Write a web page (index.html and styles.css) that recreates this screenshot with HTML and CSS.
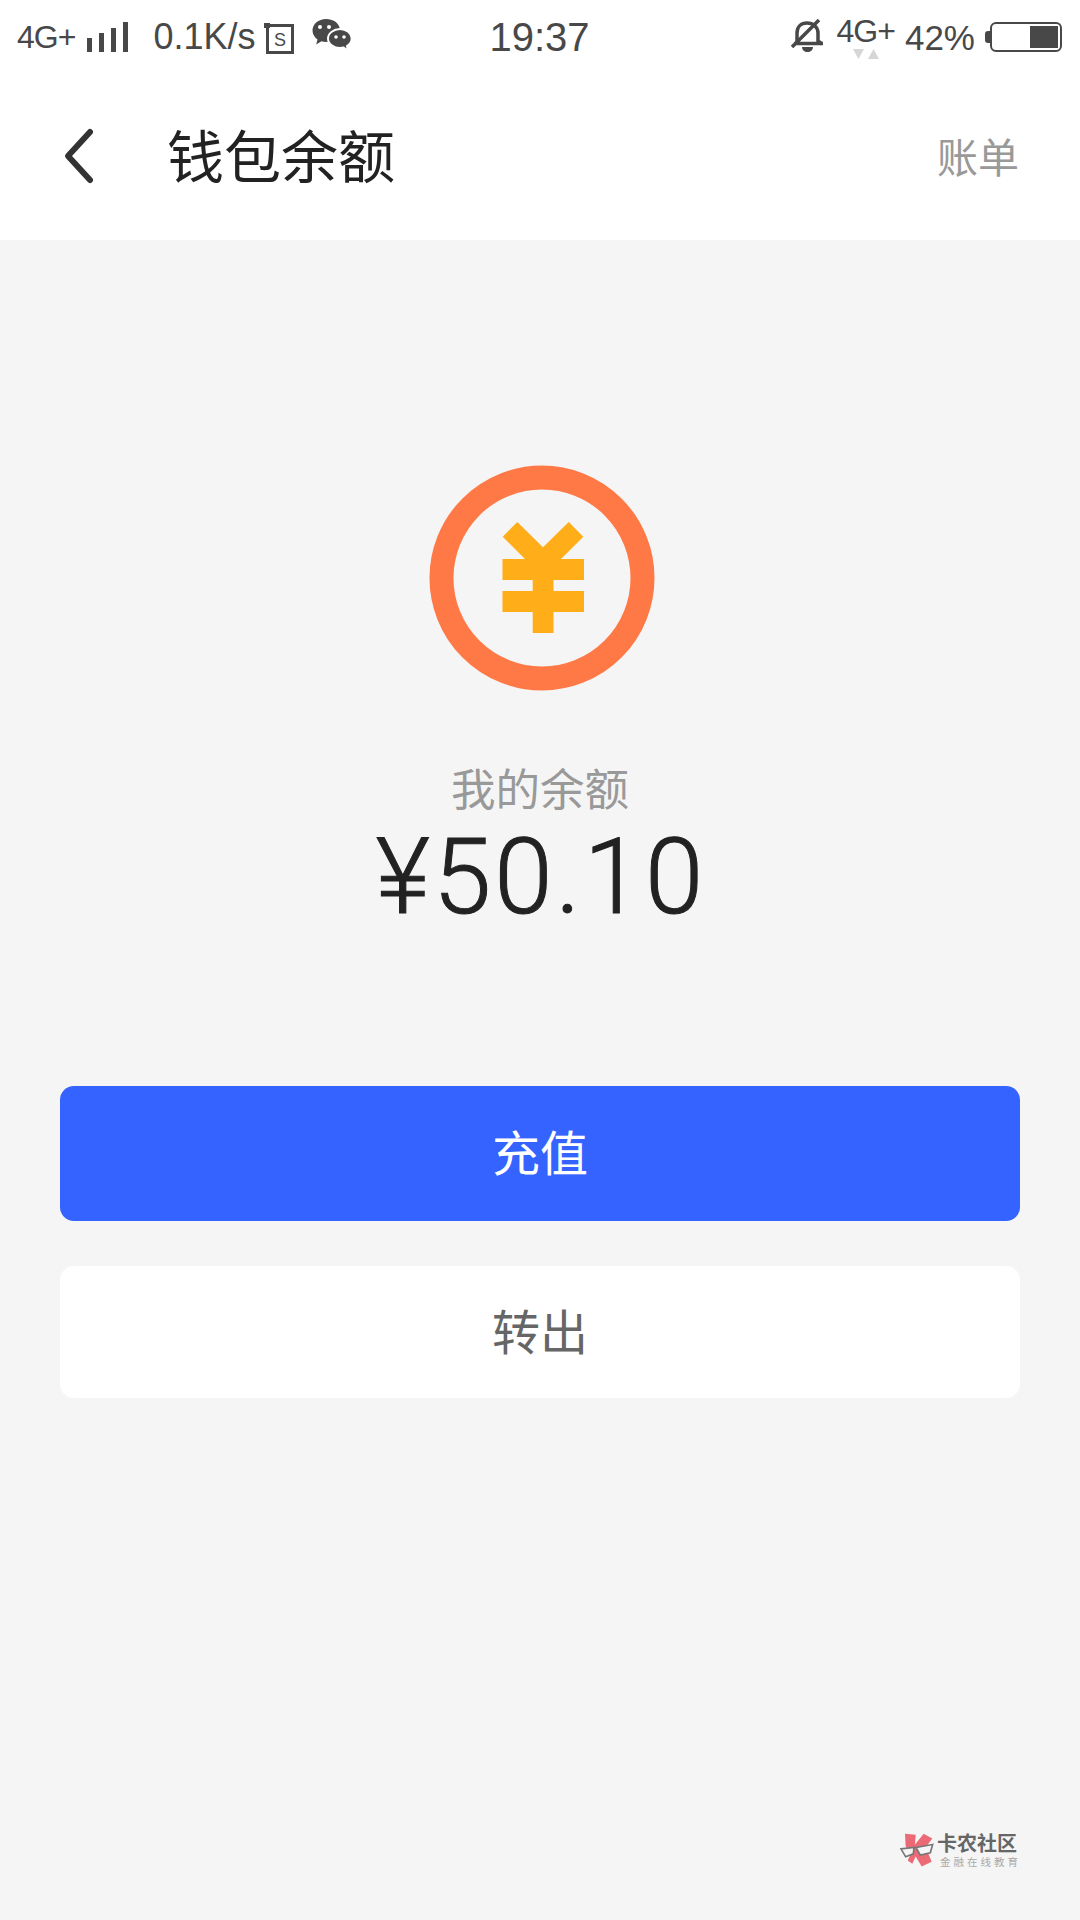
FILE: index.html
```html
<!DOCTYPE html>
<html lang="zh-CN">
<head>
<meta charset="utf-8">
<title>钱包余额</title>
<link rel="stylesheet" href="styles.css">
</head>
<body>
<div class="page">
  <header class="top">
    <div class="status">
      <div class="status-left">
        <span class="net">4G+</span>
        <svg class="signal" width="42" height="32" viewBox="0 0 42 32"><path fill="#484848" d="M0 16h5v14H0zM12 11h5v19h-5zM24 6h5v24h-5zM36 0h5v30h-5z"/></svg>
        <span class="speed">0.1K/s</span>
        <svg class="sim" width="32" height="33" viewBox="0 0 32 33"><path fill="none" stroke="#484848" stroke-width="3" d="M3.500 3.500h25v27h-25z"/><path fill="#484848" d="M0 1h6v5H0z"/><text x="16" y="23.500" text-anchor="middle" class="sim-s">S</text></svg>
        <svg class="wechat" width="40" height="36" viewBox="0 0 40 36"><path fill="#484848" d="M14 1C6.500 1 .5 6 .5 12.500c0 3.700 2 6.800 5 9l-1.300 5 5.200-3.200c1.500.4 3 .6 4.600.6 6 0 14-8 14-13C26.800 4.500 21 1 14 1z"/><path fill="#484848" stroke="#fff" stroke-width="2" d="M28 11c-6.200 0-12 4.100-12 9.500S21.800 30 28 30c1.300 0 2.500-.2 3.700-.5l4.300 3.500-1-5c2.900-1.800 4.700-4.500 4.700-7.500C39.700 15.100 34.200 11 28 11z"/><circle cx="8" cy="9" r="2" fill="#fff"/><circle cx="17" cy="9" r="2" fill="#fff"/><circle cx="24" cy="19" r="1.800" fill="#fff"/><circle cx="32" cy="19" r="1.800" fill="#fff"/></svg>
      </div>
      <div class="clock">19:37</div>
      <div class="status-right">
        <svg class="bell" width="36" height="36" viewBox="0 0 36 36"><path fill="none" stroke="#484848" stroke-width="3.500" d="M8 25V15C8 9 12 5 18 5s11 4 11 10v8l4 3"/><path fill="none" stroke="#484848" stroke-width="3.500" d="M5 25.500h29M3 29L30 2"/><path fill="#484848" d="M13 29h11c0 3-2.500 5-5.500 5s-5.500-2-5.500-5z"/></svg>
        <div class="net-stack">
          <span class="net">4G+</span>
          <svg class="arrows" width="26" height="10" viewBox="0 0 26 10"><path fill="#d6d6d6" d="M0 0h11L5.500 10zM15 10h11L20.500 0z"/></svg>
        </div>
        <span class="pct">42%</span>
        <div class="battery">
          <span class="battery-cap"></span>
          <div class="battery-body"><span class="battery-fill"></span></div>
        </div>
      </div>
    </div>
    <nav class="nav">
      <svg class="back" width="34" height="58" viewBox="0 0 34 58"><path fill="none" stroke="#333" stroke-width="6" stroke-linecap="round" stroke-linejoin="round" d="M29 5L7 29l22 24"/></svg>
      <h1 class="title">钱包余额</h1>
      <a class="bill">账单</a>
    </nav>
  </header>
  <main class="main">
    <svg class="coin" width="226" height="226" viewBox="429 465 226 226">
      <circle cx="542" cy="578" r="100.500" fill="none" stroke="#ff7946" stroke-width="24"/>
      <path fill="#ffae1a" d="M502.700 536.700L517.300 522L543 547.300L568.700 522L583.300 536.700L561 559H584V580H553.500V591H584V612H553.500V633H532.700V612H502.500V591H532.700V580H502.500V559H525z"/>
    </svg>
    <div class="label">我的余额</div>
    <div class="amount">¥50.10</div>
    <button class="btn btn-primary">充值</button>
    <button class="btn btn-plain">转出</button>
  </main>
  <div class="mark">
    <svg class="mark-logo" width="35" height="37" viewBox="15 20 105 110">
      <path fill="#ec6a75" d="M30 28L62 31L60 60L86 28L112 42L92 68L110 112L80 126L62 96L52 118L38 108L48 88L32 66z"/>
      <path fill="#f5f5f5" stroke="#777" stroke-width="5" d="M18 73L57 69L55 88L32 97zM63 69L113 60L106 85L76 92z"/>
    </svg>
    <div class="mark-text">
      <div class="mark-name">卡农社区</div>
      <div class="mark-sub">金融在线教育</div>
    </div>
  </div>
</div>
</body>
</html>
```
FILE: styles.css
```css
* { box-sizing: border-box; }
html, body { margin: 0; padding: 0; }
body {
  width: 1080px;
  height: 1920px;
  font-family: "Inter", "Noto Sans CJK SC", sans-serif;
  background: #f5f5f5;
  overflow: hidden;
}
.page { position: relative; width: 1080px; height: 1920px; display: flex; flex-direction: column; }
.top { background: #fff; height: 240px; flex: none; }

.status {
  height: 74px;
  display: grid;
  grid-template-columns: 1fr auto 1fr;
  align-items: center;
  padding: 0 18px 0 17px;
  color: #484848;
}
.status-left, .status-right { display: flex; align-items: center; }
.status-right { justify-content: flex-end; }
.net { font-size: 32px; letter-spacing: -1px; line-height: 32px; font-family: "Liberation Sans", sans-serif; }
.signal { margin-left: 12px; margin-top: 2px; }
.speed { font-size: 36px; margin-left: 24px; line-height: 40px; font-family: "Liberation Sans", sans-serif; }
.sim { margin-left: 9px; margin-top: 2px; }
.sim-s { font: 18px "Liberation Sans", sans-serif; fill: #484848; }
.wechat { margin-left: 16px; margin-top: -2px; }
.clock { font-size: 40px; line-height: 44px; font-family: "Liberation Sans", sans-serif; }
.bell { margin-top: -2px; margin-right: 1px; }
.net-stack { display: flex; flex-direction: column; align-items: center; margin-left: 11px; margin-top: 0; }
.arrows { margin-top: 2px; }
.pct { font-size: 35px; line-height: 40px; margin-left: 10px; margin-top: 2px; font-family: "Liberation Sans", sans-serif; }
.battery { display: flex; align-items: center; margin-left: 10px; }
.battery-cap { width: 5px; height: 12px; background: #484848; border-radius: 3px 0 0 3px; }
.battery-body {
  width: 72px; height: 30px;
  border: 2px solid #484848; border-radius: 6px;
  padding: 2px;
  display: flex; justify-content: flex-end;
}
.battery-fill { width: 28px; background: #484848; }

.nav { height: 166px; display: flex; align-items: center; padding: 0 61px 0 61px; }
.back { flex: none; margin-top: -3px; }
.title { margin: 2px 0 0 72px; font-size: 57px; font-weight: 400; color: #222; line-height: 70px; flex: 1; }
.bill { font-size: 41px; color: #999; line-height: 60px; margin-top: 2px; }

.main { flex: 1; display: flex; flex-direction: column; align-items: center; padding: 225px 60px 0; }
.coin { flex: none; margin-left: 3px; }
.label { font-size: 44.500px; line-height: 60px; color: #999; margin-top: 69px; }
.amount {
  font-family: "Roboto", sans-serif; font-size: 105px; line-height: 110px; color: #222; font-weight: 300;
  -webkit-text-stroke: 1px #222;
  letter-spacing: 3px; margin-top: 3px; margin-left: 2px;
}
.btn {
  width: 960px; border: 0; border-radius: 14px; font-size: 48px;
  font-family: "Noto Sans CJK SC", sans-serif; display: block;
}
.btn-primary { height: 135px; margin-top: 153px; padding-bottom: 8px; background: #3563ff; color: #fff; }
.btn-plain { height: 132px; margin-top: 45px; padding-bottom: 8px; background: #fff; color: #666; }

.mark { position: absolute; left: 900px; top: 1831px; display: flex; align-items: center; }
.mark-logo { flex: none; }
.mark-text { margin-left: 2px; margin-top: 0; display: flex; flex-direction: column; gap: 0; }
.mark-name { font-size: 20px; line-height: 24px; font-weight: 700; color: #666; font-family: "Noto Sans CJK SC", sans-serif; white-space: nowrap; }
.mark-sub { font-size: 10.500px; line-height: 13px; letter-spacing: 3px; color: #aaa; margin-left: 3px; font-family: "Noto Sans CJK SC", sans-serif; white-space: nowrap; }
```
